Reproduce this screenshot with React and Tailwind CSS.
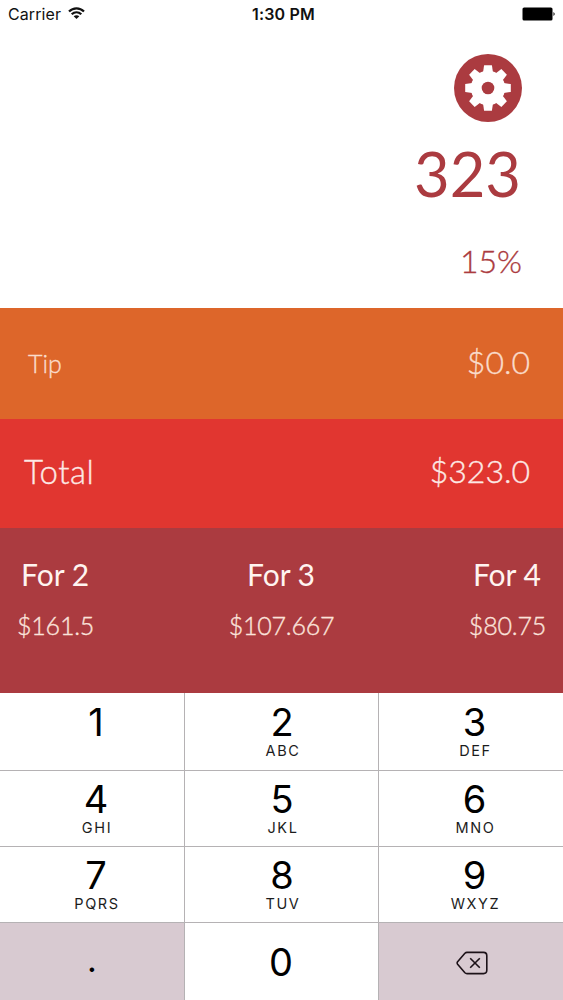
import React from 'react';

const keys = [
  { digit: '1', letters: '' },
  { digit: '2', letters: 'ABC' },
  { digit: '3', letters: 'DEF' },
  { digit: '4', letters: 'GHI' },
  { digit: '5', letters: 'JKL' },
  { digit: '6', letters: 'MNO' },
  { digit: '7', letters: 'PQRS' },
  { digit: '8', letters: 'TUV' },
  { digit: '9', letters: 'WXYZ' },
];

const shifts = ['pl-[8px]', 'pl-[1px]', 'pl-[7px]'];

function StatusBar() {
  return (
    <header className="grid h-7 shrink-0 grid-cols-3 items-center pl-[8px] pr-[7px] font-['Inter',sans-serif] text-[#111]">
      <div className="flex items-center gap-[7px]">
        <span className="text-[16px] leading-7 tracking-[0.1px]">Carrier</span>
        <svg className="mb-[2px] h-3 w-[17px]" viewBox="0 0 17 12" fill="none" stroke="currentColor" strokeWidth="2.2">
          <path d="M1 4.6C5.2.3 11.8.3 16 4.6" />
          <path d="M3.7 7.3c2.8-2.7 6.8-2.7 9.6 0" />
          <path d="M8.5 12 5.7 9.2c1.6-1.4 4-1.4 5.6 0z" fill="currentColor" stroke="none" />
        </svg>
      </div>
      <span className="pl-[3px] text-center text-[16px] font-semibold leading-7 tracking-[0.2px]">1:30 PM</span>
      <svg className="h-[14px] w-[34px] justify-self-end" viewBox="0 0 34 14">
        <rect x="0.5" y="0.5" width="30" height="13" rx="1.6" fill="#000" />
        <path d="M31.5 5q2.4 2 0 4z" fill="#000" />
      </svg>
    </header>
  );
}

function Gear() {
  return (
    <svg className="h-[68px] w-[68px] shrink-0" viewBox="-34 -34 68 68">
      <circle r="34" fill="#ab3b40" />
      <g fill="#fff">
        <circle r="17.2" />
        {[0, 45, 90, 135, 180, 225, 270, 315].map((a) => (
          <path key={a} d="M-5.2-14 -3.9-22.8H3.9L5.2-14z" transform={`rotate(${a})`} />
        ))}
      </g>
      <circle r="6.3" fill="#ab3b40" />
    </svg>
  );
}

function Share({ label, amount }) {
  return (
    <div className="flex flex-col items-center">
      <span className="pr-[1px] text-[30px] font-normal leading-[50px]">{label}</span>
      <span className="text-[25px] font-light leading-[52px] tracking-[-0.2px] text-[#fbe3dc] [-webkit-text-stroke:0.35px]">{amount}</span>
    </div>
  );
}

export default function App() {
  return (
    <main className="flex h-[1000px] w-[563px] flex-col overflow-hidden bg-white font-['Lato',sans-serif]">
      <StatusBar />
      <section className="flex h-[280px] shrink-0 flex-col items-end pr-[41px] pt-[26px] text-[#ab3b40]">
        <Gear />
        <span className="mt-[11px] pr-[1px] text-[61.5px] leading-[80px]">323</span>
        <span className="mt-[20px] text-[32px] font-light leading-[56px] [-webkit-text-stroke:0.35px]">15%</span>
      </section>
      <section className="flex h-[110.5px] shrink-0 items-center justify-between bg-[#dd662a] pb-[3px] pl-[28px] pr-[33px] font-light text-[#fadccb] [-webkit-text-stroke:0.35px]">
        <span className="pt-[2px] text-[25px] leading-10">Tip</span>
        <span className="text-[32px] leading-10">$0.0</span>
      </section>
      <section className="flex h-[109.5px] shrink-0 items-center justify-between bg-[#e13630] pb-[4px] pl-[24px] pr-[33px] font-light text-[#fde9e5] [-webkit-text-stroke:0.35px]">
        <span className="text-[33px] leading-10 tracking-[0.5px]">Total</span>
        <span className="text-[32px] leading-10">$323.0</span>
      </section>
      <section className="flex h-[165px] shrink-0 justify-between bg-[#ab3b40] px-[17px] pt-[21px] text-[#fff4f0]">
        <Share label="For 2" amount="$161.5" />
        <Share label="For 3" amount="$107.667" />
        <Share label="For 4" amount="$80.75" />
      </section>
      <section className="grid min-h-0 flex-1 grid-cols-[184px_193px_184px] grid-rows-[77px_75px_75px_1fr] gap-px bg-[#b5b2b4] font-['Inter',sans-serif] text-black">
        {keys.map(({ digit, letters }, i) => (
          <button key={digit} className={`flex flex-col items-center bg-white ${i < 3 ? 'pt-[8px]' : 'pt-[7px]'} ${shifts[i % 3]}`}>
            <span className="text-[38px] leading-[42px]">{digit}</span>
            <span className="pl-[2px] text-[14.5px] leading-[16px] tracking-[1.6px] text-[#1c1c1c]">{letters}</span>
          </button>
        ))}
        <button className="flex items-center justify-center bg-[#d8cad1] pb-[3px]">
          <span className="text-[34px] leading-[40px]">.</span>
        </button>
        <button className="flex items-center justify-center bg-white pr-[1px]">
          <span className="text-[38px] leading-[42px]">0</span>
        </button>
        <button className="flex items-center justify-center bg-[#d8cad1] pl-[2px] pt-[3px]">
          <svg className="h-6 w-8" viewBox="0 0 32 24" fill="none" stroke="#1c1218" strokeWidth="1.6" strokeLinejoin="round">
            <path d="M11 1.4H27.5Q30.8 1.4 30.8 4.7V19.3Q30.8 22.6 27.5 22.6H11Q9.8 22.6 8.9 21.7L1.6 13.2Q.7 12 1.6 10.8L8.9 2.3Q9.8 1.4 11 1.4Z" />
            <path d="M14.2 7.2 23.8 16.8M23.8 7.2 14.2 16.8" />
          </svg>
        </button>
      </section>
    </main>
  );
}
